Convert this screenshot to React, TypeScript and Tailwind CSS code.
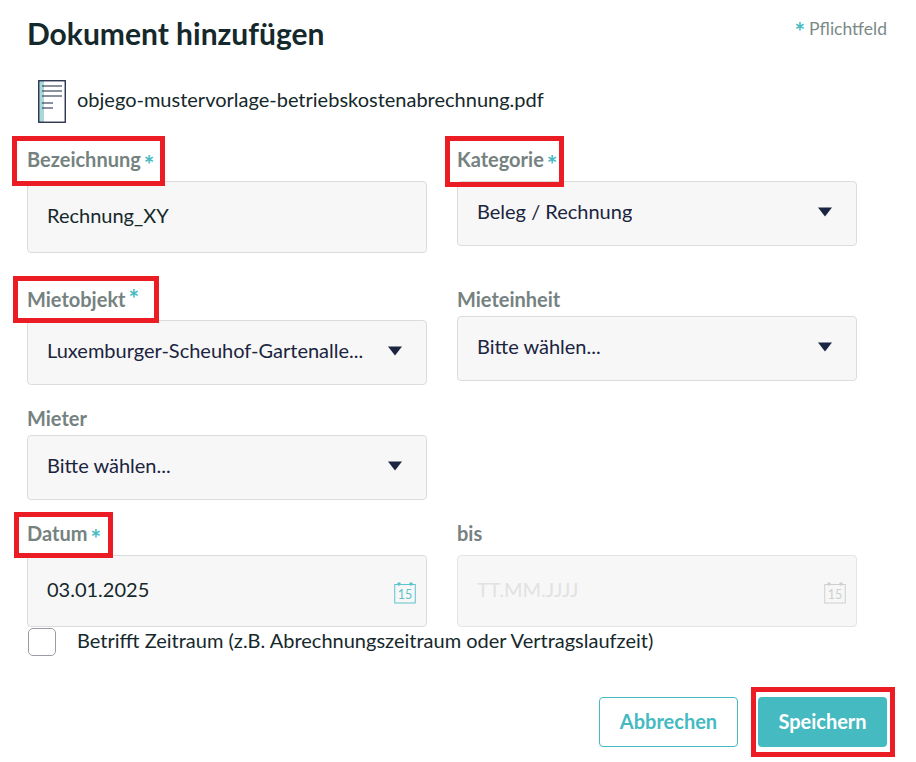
import type { ReactNode } from "react";

function Star({ className = "" }: { className?: string }) {
  return <span className={`ml-[3px] text-[25px] leading-none font-bold text-[#45bac1] ${className}`}>*</span>;
}

function Label({ text, star, starClass, mark }: { text: string; star?: boolean; starClass?: string; mark?: string }) {
  return (
    <div className="relative flex h-[22px] items-center text-[20px] font-bold text-[#75827f]">
      <span className="mb-[2px]">{text}</span>
      {star && <Star className={starClass} />}
      {mark && <div className={`absolute z-10 border-[5px] border-[#ec1c24] ${mark}`} />}
    </div>
  );
}

function Box({ className = "", children }: { className?: string; children: ReactNode }) {
  return (
    <div className={`flex items-center rounded-[4px] border border-[#dcdcdc] bg-[#f7f7f7] pl-[19px] text-[20px] ${className}`}>
      {children}
    </div>
  );
}

function Select({ value, className = "" }: { value: string; className?: string }) {
  return (
    <Box className={`h-[65px] justify-between pr-[24px] pb-[3px] text-[#1b2440] ${className}`}>
      <span className="mb-[2px] truncate">{value}</span>
      <svg width="14" height="10" viewBox="0 0 14 10" className="shrink-0">
        <path d="M0 0.5h14L7 9.5z" fill="#1b2440" />
      </svg>
    </Box>
  );
}

function CalendarIcon({ color }: { color: string }) {
  return (
    <svg width="22" height="23" viewBox="0 0 22 23" className="shrink-0">
      <rect x="0.75" y="3.5" width="20.5" height="18.5" fill="none" stroke={color} strokeWidth="1" />
      <circle cx="5" cy="3" r="1.8" fill={color} />
      <circle cx="17" cy="3" r="1.8" fill={color} />
      <text x="11" y="18" textAnchor="middle" fontSize="12.5" fontFamily="Lato, sans-serif" fill={color}>
        15
      </text>
    </svg>
  );
}

function DocIcon() {
  return (
    <svg width="28" height="43" viewBox="0 0 28 43" className="shrink-0">
      <rect x="1" y="1" width="5" height="41" fill="#a9d8da" />
      <rect x="0.75" y="0.75" width="26.5" height="41.5" fill="none" stroke="#1b2440" strokeWidth="1.3" />
      <path d="M4 6h20M4 11h20M4 16h20M4 23h11M4 28h11" stroke="#1b2440" strokeWidth="1.2" fill="none" />
    </svg>
  );
}

export default function App() {
  return (
    <div className="h-[762px] w-[916px] overflow-hidden bg-white pl-[27px] pr-[29px] font-[Lato,sans-serif] text-[#15282b]">
      {/* Header */}
      <div className="flex items-start justify-between pt-[14px]">
        <h1 className="h-[40px] text-[30px] leading-[38px] font-bold">Dokument hinzufügen</h1>
        <div className="flex h-[30px] items-center text-[17.5px] text-[#7b8a88]">
          <Star className="mt-[5px] mr-[4px] ml-0" />
          Pflichtfeld
        </div>
      </div>

      {/* File */}
      <div className="mt-[26px] flex h-[43px] items-center gap-[11px] pl-[11px] text-[20px]">
        <DocIcon />
        <span className="mb-[5px]">objego-mustervorlage-betriebskostenabrechnung.pdf</span>
      </div>

      {/* Form */}
      <div className="mt-[26px] flex gap-[30px]">
        <div className="flex w-[400px] flex-col">
          <Label text="Bezeichnung" star starClass="mt-[8px]" mark="-left-[15px] -top-[13px] h-[50px] w-[153px]" />
          <Box className="mt-[10px] h-[72px] pb-[4px]">Rechnung_XY</Box>

          <div className="mt-[36px]">
            <Label text="Mietobjekt" star starClass="-mt-[3px]" mark="-left-[14px] -top-[13px] h-[47px] w-[146px]" />
          </div>
          <Select value="Luxemburger-Scheuhof-Gartenalle..." className="mt-[9px]" />

          <div className="mt-[23px]">
            <Label text="Mieter" />
          </div>
          <Select value="Bitte wählen..." className="mt-[5px]" />

          <div className="mt-[23px]">
            <Label text="Datum" star starClass="mt-[8px]" mark="-left-[13px] -top-[11px] h-[46px] w-[99px]" />
          </div>
          <Box className="mt-[10px] h-[72px] justify-between pr-[10px]">
            <span className="mb-[4px]">03.01.2025</span>
            <span className="mt-[2px] flex">
              <CalendarIcon color="#5cc4ca" />
            </span>
          </Box>
        </div>

        <div className="flex w-[400px] flex-col">
          <Label text="Kategorie" star starClass="mt-[8px]" mark="-left-[12px] -top-[13px] h-[51px] w-[119px]" />
          <Select value="Beleg / Rechnung" className="mt-[10px]" />

          <div className="mt-[43px]">
            <Label text="Mieteinheit" />
          </div>
          <Select value="Bitte wählen..." className="mt-[5px]" />

          <div className="mt-[142px]">
            <Label text="bis" />
          </div>
          <Box className="mt-[10px] h-[72px] justify-between border-[#e4e4e4] pr-[10px] text-[#e2e2e2]">
            <span className="mb-[4px]">TT.MM.JJJJ</span>
            <span className="mt-[2px] flex">
              <CalendarIcon color="#cfcfcf" />
            </span>
          </Box>
        </div>
      </div>

      {/* Checkbox */}
      <div className="flex items-start gap-[21px] pl-[1px] pt-[1px] text-[20px]">
        <div className="h-[28px] w-[28px] rounded-[5px] border border-[#9b9ba6] bg-white" />
        <span className="leading-[24px]">Betrifft Zeitraum (z.B. Abrechnungszeitraum oder Vertragslaufzeit)</span>
      </div>

      {/* Actions */}
      <div className="mt-[41px] flex justify-end gap-[20px] text-[20px] font-bold">
        <div className="flex h-[50px] w-[139px] items-center justify-center rounded-[4px] border border-[#45bac1] bg-white pb-[2px] text-[#45bac1]">
          Abbrechen
        </div>
        <div className="relative flex h-[50px] w-[129px] items-center justify-center rounded-[4px] bg-[#45bac1] pb-[2px] text-white">
          Speichern
          <div className="absolute -top-[10px] -left-[7px] h-[70px] w-[144px] border-[5px] border-[#ec1c24]" />
        </div>
      </div>
    </div>
  );
}
